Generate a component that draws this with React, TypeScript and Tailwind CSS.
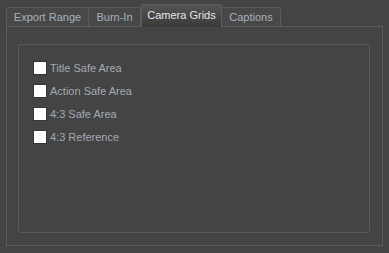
import React from "react";

const tabs = [
  { name: "Export Range", w: "w-[83px]" },
  { name: "Burn-In", w: "w-[53px]" },
  { name: "Camera Grids", w: "w-[81px]", active: true },
  { name: "Captions", w: "w-[60px]" },
];

const options = ["Title Safe Area", "Action Safe Area", "4:3 Safe Area", "4:3 Reference"];

export default function App() {
  return (
    <div
      className="w-[389px] h-[253px] bg-[#444444] pt-[4px] px-[6px] text-[11px]"
      style={{ fontFamily: '"Liberation Sans", Arial, sans-serif' }}
    >
      {/* Tab bar */}
      <div className="flex items-end h-[22px]">
        {tabs.map((t) =>
          t.active ? (
            <div
              key={t.name}
              className={`${t.w} h-[23px] -mb-[1px] relative z-10 flex items-center justify-center rounded-t-[3px] border border-b-0 border-[#5e5e5e] bg-gradient-to-b from-[#545454] to-[#3a3a3a] text-[#e2e6ea] pb-[2px]`}
            >
              {t.name}
            </div>
          ) : (
            <div
              key={t.name}
              className={`${t.w} h-[19px] flex items-center justify-center rounded-t-[2px] border border-b-0 border-[#5a5a5a] bg-[#484848] text-[#a9b1bb] -ml-[1px] first:ml-0`}
            >
              {t.name}
            </div>
          )
        )}
      </div>

      {/* Tab pane */}
      <div className="h-[220px] border border-[#5c5c5c] pt-[17px] pl-[11px] pr-[12px] pb-[12px]">
        <div className="h-full rounded-[3px] border border-[#5a5a5a] pt-[17px] pl-[15px] flex flex-col gap-[11px]">
          {options.map((o) => (
            <label key={o} className="flex items-center gap-[4px] h-[12px] text-[#a3aab3]">
              <span className="w-[12px] h-[12px] bg-white shadow-[0_0_0_1px_#353535] shrink-0" />
              <span className="leading-none">{o}</span>
            </label>
          ))}
        </div>
      </div>
    </div>
  );
}
